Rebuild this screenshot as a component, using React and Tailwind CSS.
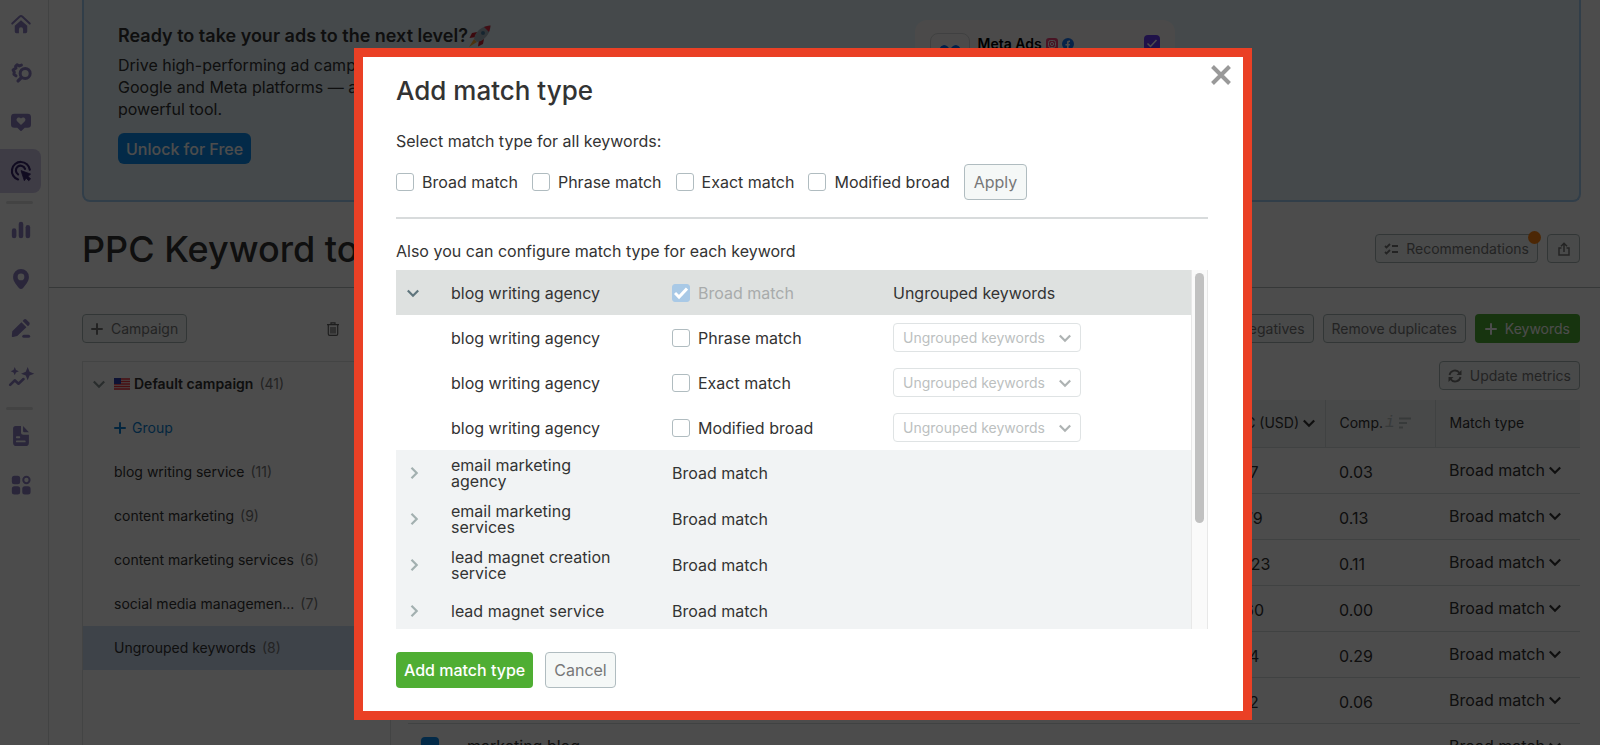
import React, { useState } from 'react';

const matchTypes = ['Broad match', 'Phrase match', 'Exact match', 'Modified broad'];

const groups = [
  { name: 'blog writing service', count: 11 },
  { name: 'content marketing', count: 9 },
  { name: 'content marketing services', count: 6 },
  { name: 'social media managemen...', count: 7 },
  { name: 'Ungrouped keywords', count: 8, active: true },
];

const metrics = [
  { id: 1, cpc: '4.17', comp: '0.03' },
  { id: 2, cpc: '3.79', comp: '0.13' },
  { id: 3, cpc: '10.23', comp: '0.11' },
  { id: 4, cpc: '4.60', comp: '0.00' },
  { id: 5, cpc: '5.14', comp: '0.29' },
  { id: 6, cpc: '5.12', comp: '0.06' },
  { id: 7, keyword: 'marketing blog' },
];

const collapsedKeywords = [
  'email marketing agency',
  'email marketing services',
  'lead magnet creation service',
  'lead magnet service',
];

const Plus = ({ className = 'w-3 h-3' }) => (
  <svg className={className} viewBox="0 0 12 12" fill="none" stroke="currentColor" strokeWidth="2" strokeLinecap="round">
    <path d="M6 1v10M1 6h10" />
  </svg>
);

const Chevron = ({ className = 'w-3 h-3' }) => (
  <svg className={className} viewBox="0 0 12 12" fill="none" stroke="currentColor" strokeWidth="2.200">
    <path d="M.8 3.500l5.200 5.200 5.200-5.200" />
  </svg>
);

/* Sidebar icons */
const icons = {
  home: (
    <>
      <path d="M1.500 11.500l8.700-8.200a2.600 2.600 0 0 1 3.600 0l8.700 8.200" fill="none" stroke="currentColor" strokeWidth="2.400" strokeLinecap="round" />
      <path d="M12 7.500l7.500 6.500v7a2 2 0 0 1-2 2h-3v-4.500a2.500 2.500 0 0 0-5 0V23h-3a2 2 0 0 1-2-2v-7z" fill="currentColor" />
    </>
  ),
  research: (
    <g fill="none" stroke="currentColor" strokeLinecap="round" strokeLinejoin="round">
      <path d="M12.500 2.500l-2.500 1-2.500-1.500L5.500 4 6 6 2.500 8.500 4 11l-.5 2.500L6 15.500" strokeWidth="3.600" />
      <circle cx="17" cy="12.500" r="6" strokeWidth="3.600" />
      <path d="M12.500 17.500L8.500 21.500" strokeWidth="4" />
    </g>
  ),
  heart: (
    <path
      fillRule="evenodd"
      fill="currentColor"
      d="M4 2h16a4 4 0 0 1 4 4v9a4 4 0 0 1-4 4h-3.500L12.800 22.500a1.200 1.200 0 0 1-1.600 0L7.500 19H4a4 4 0 0 1-4-4V6a4 4 0 0 1 4-4zm0 0zm8 13.500l4.600-4.500c2.400-2.800-1.800-6.200-4.600-3.300-2.800-2.900-7 .5-4.600 3.300z"
    />
  ),
  target: (
    <>
      <g fill="none" stroke="currentColor" strokeWidth="2.600" strokeLinecap="round">
        <path d="M8.500 22.200A10.800 10.800 0 1 1 22.600 10.500" />
        <path d="M8.500 16A5.600 5.600 0 1 1 16.800 9.500" />
      </g>
      <path d="M12 11.500l11.500 4.200-3 2.700 3 3.200-2.300 2-3-3-2.200 3z" fill="currentColor" stroke="currentColor" strokeLinejoin="round" />
    </>
  ),
  bars: (
    <g fill="currentColor">
      <rect x="1" y="10" width="5.500" height="12" rx="2.750" />
      <rect x="9.250" y="2" width="5.500" height="20" rx="2.750" />
      <rect x="17.500" y="6" width="5.500" height="16" rx="2.750" />
    </g>
  ),
  pin: (
    <path
      fillRule="evenodd"
      fill="currentColor"
      d="M12 0a9.500 9.500 0 0 1 9.500 9.500c0 6-4.500 9.500-7 13.300-1.200 1.600-3.800 1.600-5 0-2.500-3.800-7-7.300-7-13.300A9.500 9.500 0 0 1 12 0zm0 5.500a4 4 0 1 0 0 8 4 4 0 0 0 0-8z"
    />
  ),
  pencil: (
    <g fill="currentColor">
      <path d="M1.500 16L12.500 5l6 6-11 10.500-5 1.300a1.200 1.200 0 0 1-1.500-1.400z" />
      <path d="M14 3.500l1.200-1.300a2.500 2.500 0 0 1 3.500 0l3 3a2.500 2.500 0 0 1 0 3.500L20.300 10z" />
      <rect x="13.500" y="20" width="9.500" height="3.800" rx="1.900" />
    </g>
  ),
  trend: (
    <>
      <path d="M-1 21.500l5.500-5.500 4.500 4 6-5.500" fill="none" stroke="currentColor" strokeWidth="3.200" strokeLinecap="round" strokeLinejoin="round" />
      <path d="M4.500 0L6 3.500 9.500 5 6 6.500 4.500 10 3 6.500-.5 5 3 3.500z" fill="currentColor" />
      <path d="M20 0l2.300 5.700L28 8l-5.700 2.300L20 16l-2.300-5.700L12 8l5.700-2.300z" fill="currentColor" />
    </>
  ),
  doc: (
    <>
      <path d="M5.500 0H12v7.500a3 3 0 0 0 3 3h6.500V20a4 4 0 0 1-4 4h-11a4 4 0 0 1-4-4V3a3 3 0 0 1 3-3z" fill="currentColor" />
      <path d="M14.500 0l7 7.500h-5.500a1.500 1.500 0 0 1-1.500-1.500z" fill="currentColor" />
      <path d="M7 13.500h3M7 18.500h9.500" stroke="#ffffff" strokeWidth="2.200" strokeLinecap="round" />
    </>
  ),
  grid: (
    <g fill="currentColor">
      <rect x="1" y="1" width="10" height="10" rx="3" />
      <rect x="1" y="13.500" width="10" height="10" rx="3" />
      <rect x="13.500" y="13.500" width="10" height="10" rx="3" />
      <circle cx="18.500" cy="6" r="3.800" fill="none" stroke="currentColor" strokeWidth="2.400" />
    </g>
  ),
};

const SidebarItem = ({ icon, label, active = false }) => (
  <a href="#" aria-label={label} className="flex h-[49px] items-start pt-px">
    <span
      className={`flex h-11 w-[41px] items-center justify-center rounded-r-lg ${
        active ? 'bg-[#d0c8e8] text-[#38256c]' : 'text-[#8d80c4]'
      }`}
    >
      <svg className="w-5 h-5 overflow-visible" viewBox="0 0 24 24">
        {icons[icon]}
      </svg>
    </span>
  </a>
);

const SidebarDivider = () => (
  <div className="flex h-[10px] items-center pl-1.5">
    <div className="h-[3px] w-[27px] rounded-full bg-[#dfe1e2]" />
  </div>
);

const Sidebar = () => (
  <nav className="w-[49px] shrink-0 border-r border-[#dcdfe0] pt-px">
    <SidebarItem icon="home" label="Home" />
    <SidebarItem icon="research" label="Research" />
    <SidebarItem icon="heart" label="Social" />
    <SidebarItem icon="target" label="Advertising" active />
    <SidebarDivider />
    <SidebarItem icon="bars" label="Analytics" />
    <SidebarItem icon="pin" label="Local" />
    <SidebarItem icon="pencil" label="Content" />
    <SidebarItem icon="trend" label="Trends" />
    <SidebarDivider />
    <SidebarItem icon="doc" label="Reports" />
    <SidebarItem icon="grid" label="Apps" />
  </nav>
);

const Rocket = () => (
  <svg className="w-6 h-6" viewBox="0 0 24 24">
    <path d="M9 8L4 9l-2.500 5L8 13zM16 15l-1 5-5 2.500L11 16z" fill="#c8202f" />
    <path d="M6 15l-5 8 8-5z" fill="#ffac33" />
    <path d="M22.500 1.500C16 2 11 4.500 7 11l-1 4 3 3 4-1c6.500-4 9-9 9.500-15.500z" fill="#a9b4be" />
    <path d="M22.500 1.500c-2.300.1-4.500.6-6.500 1.500l5 5c.9-2 1.400-4.200 1.500-6.500z" fill="#dd2e44" />
    <circle cx="15" cy="9" r="2" fill="#4c7da0" />
  </svg>
);

const Banner = () => (
  <section className="grid grid-cols-2 rounded-b-lg border-x-2 border-b-2 border-[#a6cff5] bg-[#e6f5fb]">
    <div className="pt-6 pb-9 pl-[34px]">
      <h2 className="flex items-center text-lg leading-6 font-semibold">
        Ready to take your ads to the next level? <Rocket />
      </h2>
      <p className="mt-1.5 w-[330px] text-base leading-[22px]">
        Drive high-performing ad campaigns on Google and Meta platforms — all in one powerful tool.
      </p>
      <button className="mt-[13px] h-[31px] rounded-md bg-[#0a8ef0] px-2 text-base leading-none font-medium text-white">
        Unlock for Free
      </button>
    </div>
    <div className="pt-5 pl-[83px]">
      <div className="flex w-[260px] items-start rounded-xl bg-[#fbf9f8] px-[15px] pt-[13px] pb-4">
        <span className="flex h-10 w-10 items-center justify-center rounded-lg border border-[#d5d8d9]">
          <svg className="w-6 h-5" viewBox="0 0 24 20" fill="none" stroke="#0a6cf5" strokeWidth="3">
            <path d="M2 13c0-12 6-12 10-3s10 9 10 3c0-12-6-12-10-3s-10 9-10 3z" />
          </svg>
        </span>
        <span className="ml-2 text-sm leading-[22px] font-semibold text-black">Meta Ads</span>
        <svg className="mt-[5px] ml-1 w-3 h-3" viewBox="0 0 12 12">
          <rect width="12" height="12" rx="3" fill="#f0447a" />
          <rect x="2.500" y="2.500" width="7" height="7" rx="2" fill="none" stroke="#ffffff" />
          <circle cx="6" cy="6" r="1.600" fill="none" stroke="#ffffff" />
        </svg>
        <svg className="mt-[5px] ml-1 w-3 h-3" viewBox="0 0 12 12">
          <circle cx="6" cy="6" r="6" fill="#1877f2" />
          <path d="M5 12V7.500H3.500V6H5V4.500C5 3 6 2.300 8 2.600V4C7 3.900 6.600 4.100 6.600 4.800V6H8L7.700 7.500H6.600V12z" fill="#ffffff" />
        </svg>
        <span className="mt-0.5 ml-auto flex h-4 w-4 items-center justify-center rounded-sm bg-[#6a3df5]">
          <svg className="w-3 h-3" viewBox="0 0 12 12" fill="none" stroke="#ffffff" strokeWidth="1.500">
            <path d="M1.500 6.500l3 3 6-6.500" />
          </svg>
        </span>
      </div>
    </div>
  </section>
);

const OutlineButton = ({ children, label, className = '' }) => (
  <button
    aria-label={label}
    className={`relative flex h-[29px] items-center gap-2 rounded border border-[#a9b6b6] bg-[#f5f8f7] px-2 text-sm leading-none whitespace-nowrap text-[#777] ${className}`}
  >
    {children}
  </button>
);

const PageHeader = () => (
  <header className="flex h-[86px] shrink-0 items-center justify-between border-b border-[#b5bcbc] pt-2 pr-5 pl-[33px]">
    <h1 className="text-4xl leading-none font-medium">PPC Keyword tool</h1>
    <div className="flex gap-[9px]">
      <OutlineButton>
        <svg className="w-3.5 h-3" viewBox="0 0 14 12" fill="none" stroke="currentColor" strokeWidth="1.800">
          <path d="M1 3l1.500 1.500L6 1M1 9l1.500 1.500L6 7M8 3h6M8 9h6" />
        </svg>
        Recommendations
        <span className="absolute -top-1 -right-1 h-[13px] w-[13px] rounded-full bg-[#ff8412]" />
      </OutlineButton>
      <OutlineButton label="Share" className="w-[33px] justify-center">
        <svg className="w-3 h-3.5" viewBox="0 0 12 14" fill="none" stroke="currentColor" strokeWidth="1.500">
          <path d="M3.500 6H1v7h10V6H8.500M6 10V1.500M3 4.200L6 1.200l3 3" />
        </svg>
      </OutlineButton>
    </div>
  </header>
);

const Flag = () => (
  <svg className="w-4 h-3" viewBox="0 0 16 12">
    <rect width="16" height="12" fill="#f4f4f4" />
    <path d="M0 1h16M0 3.500h16M0 6h16M0 8.500h16M0 11h16" stroke="#f02f3a" strokeWidth="1.500" />
    <rect width="7" height="6" fill="#2c3fae" />
  </svg>
);

const CampaignPanel = () => (
  <aside className="flex w-[309px] shrink-0 flex-col">
    <div className="flex items-center justify-between pr-[52px]">
      <OutlineButton>
        <Plus /> Campaign
      </OutlineButton>
      <button aria-label="Delete" className="text-[#666]">
        <svg className="w-3 h-3.5" viewBox="0 0 12 14" fill="none" stroke="currentColor" strokeWidth="1.200">
          <path d="M0 2.600h12M4 2.300V.8h4v1.500M1.300 3v9a1.300 1.300 0 0 0 1.300 1.300h6.800a1.300 1.300 0 0 0 1.300-1.300V3M4 5v6.500M6 5v6.500M8 5v6.500" />
        </svg>
      </button>
    </div>
    <div className="mt-[18px] flex-1 border border-[#dfe3e3] text-sm">
      <div className="flex h-11 items-center pl-[10px]">
        <Chevron className="w-3 h-3 text-[#8b9696]" />
        <span className="mr-1 ml-[9px]">
          <Flag />
        </span>
        <span className="font-semibold">Default campaign</span>
        <span className="ml-1.5 text-[#777]">(41)</span>
      </div>
      <button className="flex h-11 items-center gap-1.5 pl-[31px] text-[#0b7fd4]">
        <Plus /> Group
      </button>
      {groups.map((group) => (
        <a
          key={group.name}
          href="#"
          className={`flex h-11 items-center gap-1.5 pl-[31px] ${group.active ? 'bg-[#cfe0f5]' : ''}`}
        >
          {group.name}
          <span className="text-[#777]">({group.count})</span>
        </a>
      ))}
    </div>
  </aside>
);

const KeywordTable = () => (
  <div className="ml-[17px] min-w-0 flex-1">
    <div className="flex justify-end gap-[9px]">
      <OutlineButton>Cross negatives</OutlineButton>
      <OutlineButton>Remove duplicates</OutlineButton>
      <button className="flex h-[29px] items-center gap-2 rounded bg-[#4fae33] px-[10px] text-sm leading-none text-white">
        <Plus /> Keywords
      </button>
    </div>
    <div className="mt-[18px] flex justify-end">
      <OutlineButton>
        <svg className="w-3.5 h-3.5" viewBox="0 0 14 14" fill="none" stroke="currentColor" strokeWidth="1.800">
          <path d="M1.500 6A5.500 5.500 0 0 1 11.500 4M12.500 8A5.500 5.500 0 0 1 2.500 10" />
          <path d="M13.500 1v5H8.500zM.5 13V8h5z" fill="currentColor" stroke="none" />
        </svg>
        Update metrics
      </OutlineButton>
    </div>
    <table className="mt-[10px] w-full table-fixed text-left">
      <thead>
        <tr className="h-[47px] border-b border-[#d5dcdc] bg-[#f1f3f4] text-sm">
          <th />
          <th className="w-[113px] border-r border-[#d5dcdc] pl-[14px] font-normal">
            <button className="flex items-center gap-1 whitespace-nowrap">
              CPC (USD) <Chevron />
            </button>
          </th>
          <th className="w-[110px] border-r border-[#d5dcdc] pl-[14px] font-normal">
            <span className="flex items-center">
              Comp.
              <i className="ml-0.5 font-['Liberation_Mono',monospace] text-base leading-none text-[#b9c2c2]">i</i>
              <svg className="ml-1 w-3 h-3" viewBox="0 0 12 12" stroke="#b9c2c2" strokeWidth="1.800">
                <path d="M0 1.500h12M0 6h8M0 10.500h4" />
              </svg>
            </span>
          </th>
          <th className="w-[145px] pl-[14px] font-normal">Match type</th>
        </tr>
      </thead>
      <tbody>
        {metrics.map((row) => (
          <tr key={row.id} className="h-[46px] border-b border-[#d5dcdc]">
            <td className="pl-[13px]">
              <label className="flex items-center gap-7">
                <input
                  type="checkbox"
                  defaultChecked
                  aria-label="Select keyword"
                  className="h-[18px] w-[18px] appearance-none rounded-sm bg-[#0a8ef0]"
                />
                {row.keyword}
              </label>
            </td>
            <td className="pt-1 pl-[18px]">{row.cpc}</td>
            <td className="pt-1 pl-[14px]">{row.comp}</td>
            <td className="pl-[14px]">
              <button className="flex items-center gap-1">
                Broad match <Chevron />
              </button>
            </td>
          </tr>
        ))}
      </tbody>
    </table>
  </div>
);

const Checkbox = ({ label, checked, disabled = false, onChange }) => (
  <label className={`flex items-center gap-2 whitespace-nowrap ${disabled ? 'text-[#a8abab]' : ''}`}>
    <span className="relative flex">
      <input
        type="checkbox"
        checked={checked}
        disabled={disabled}
        onChange={onChange}
        className="h-[18px] w-[18px] appearance-none rounded-[3px] border border-[#b0bcc0] bg-white checked:border-[#a9c9e6] checked:bg-[#a9c9e6]"
      />
      {checked && (
        <svg className="pointer-events-none absolute inset-0 m-auto w-3.5 h-3.5" viewBox="0 0 14 14" fill="none" stroke="#ffffff" strokeWidth="3">
          <path d="M1 7l4 4 8-8.500" />
        </svg>
      )}
    </span>
    {label}
  </label>
);

const GroupSelect = ({ label }) => (
  <span className="relative block w-[188px] text-[#bcbfbf]">
    <select
      disabled
      aria-label={label}
      className="block h-[29px] w-full appearance-none rounded border border-[#dfe3e4] bg-white pl-[9px] text-sm opacity-100"
    >
      <option>Ungrouped keywords</option>
    </select>
    <Chevron className="pointer-events-none absolute top-[9px] right-[10px] w-3 h-3 text-[#aeb3b3]" />
  </span>
);

const MatchTypeModal = () => {
  const [selected, setSelected] = useState([]);
  const [perKeyword, setPerKeyword] = useState([]);

  const toggle = (list, setList, type) => {
    setList(list.includes(type) ? list.filter((item) => item !== type) : [...list, type]);
  };

  return (
    <div className="fixed inset-0 flex items-start justify-center bg-black/70 pt-12 pl-1.5">
      <div
        role="dialog"
        aria-labelledby="modal-title"
        className="relative w-[898px] border-[9px] border-[#ea4025] bg-white pt-5 pr-[35px] pb-[23px] pl-[33px]"
      >
        <button aria-label="Close" className="absolute top-2 right-3 text-[#999]">
          <svg className="w-5 h-5" viewBox="0 0 20 20" stroke="currentColor" strokeWidth="4">
            <path d="M1.500 1.500l17 17M18.500 1.500l-17 17" />
          </svg>
        </button>

        <h2 id="modal-title" className="text-[26px] leading-7 font-medium">Add match type</h2>
        <p className="mt-6 leading-6">Select match type for all keywords:</p>
        <div className="mt-[11px] flex items-center gap-[14px]">
          {matchTypes.map((type) => (
            <Checkbox
              key={type}
              label={type}
              checked={selected.includes(type)}
              onChange={() => toggle(selected, setSelected, type)}
            />
          ))}
          <button className="h-9 rounded border border-[#b0bcc0] bg-[#f5f8f7] px-[9px] leading-none text-[#777]">
            Apply
          </button>
        </div>

        <hr className="mt-[17px] border-t-2 border-[#d8dbdc]" />
        <p className="mt-5 leading-6">Also you can configure match type for each keyword</p>

        <div className="mt-[7px] flex">
          <div className="h-[359px] flex-1 overflow-hidden">
            <table className="w-full table-fixed text-left">
              <tbody>
                <tr className="h-[45px] bg-[#dee1e0]">
                  <td className="w-[55px] pl-[11px]">
                    <button aria-label="Collapse" className="block text-[#5f757d]">
                      <Chevron />
                    </button>
                  </td>
                  <td className="w-[221px]">blog writing agency</td>
                  <td className="w-[221px]">
                    <Checkbox label="Broad match" checked disabled />
                  </td>
                  <td>Ungrouped keywords</td>
                </tr>
                {matchTypes.slice(1).map((type) => (
                  <tr key={type} className="h-[45px] bg-white">
                    <td />
                    <td>blog writing agency</td>
                    <td>
                      <Checkbox
                        label={type}
                        checked={perKeyword.includes(type)}
                        onChange={() => toggle(perKeyword, setPerKeyword, type)}
                      />
                    </td>
                    <td>
                      <GroupSelect label={`${type} group`} />
                    </td>
                  </tr>
                ))}
                {collapsedKeywords.map((keyword) => (
                  <tr key={keyword} className="h-[46px] bg-[#f1f3f4]">
                    <td className="pl-3">
                      <button aria-label="Expand" className="block text-[#a3b0b0]">
                        <Chevron className="w-3 h-3 -rotate-90" />
                      </button>
                    </td>
                    <td className="pr-14 leading-4">{keyword}</td>
                    <td>Broad match</td>
                    <td />
                  </tr>
                ))}
              </tbody>
            </table>
          </div>
          <div className="w-[17px] border-x border-[#e8e8e8] bg-[#fafafa] px-[3px] pt-[3px]">
            <div className="h-[250px] rounded-full bg-[#c1c1c1]" />
          </div>
        </div>

        <div className="mt-[23px] flex gap-3">
          <button className="h-9 rounded bg-[#4fae33] px-2 leading-none font-medium text-white">
            Add match type
          </button>
          <button className="h-9 rounded border border-[#b0bcc0] bg-[#f5f8f7] px-2 leading-none text-[#777]">
            Cancel
          </button>
        </div>
      </div>
    </div>
  );
};

const App = () => {
  return (
    <div className="flex h-screen overflow-hidden bg-white font-['Inter',sans-serif] text-base text-[#333]">
      <Sidebar />
      <main className="flex min-w-0 flex-1 flex-col">
        <div className="pr-[19px] pl-[33px]">
          <Banner />
        </div>
        <PageHeader />
        <div className="flex flex-1 pt-[26px] pr-5 pl-[33px]">
          <CampaignPanel />
          <KeywordTable />
        </div>
      </main>
      <MatchTypeModal />
    </div>
  );
};

export default App;
